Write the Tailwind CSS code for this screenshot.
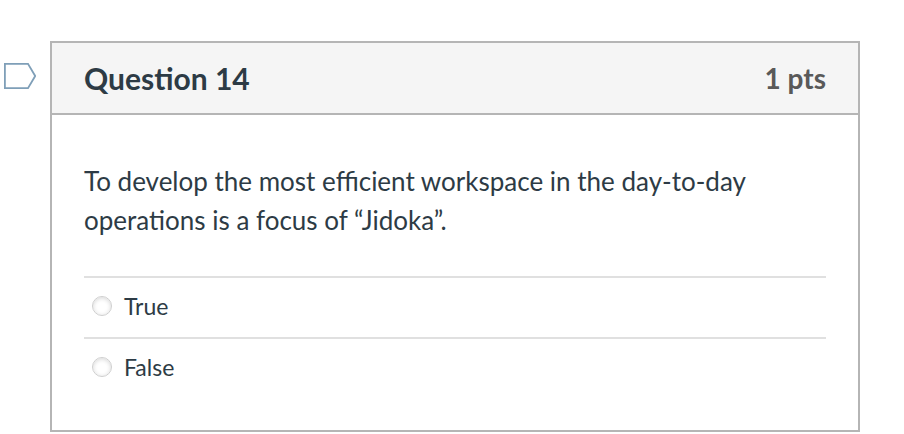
<!DOCTYPE html>
<html lang="en">
<head>
    <meta charset="UTF-8">
    <meta name="viewport" content="width=device-width, initial-scale=1.0">
    <title>Question 14</title>
    <script src="https://cdn.jsdelivr.net/npm/@tailwindcss/browser@4"></script>
</head>
<body class="bg-white font-['Lato',sans-serif] text-[#2d3b45] antialiased">
    <main class="flex items-start pl-1 pr-11 pt-[41px]">
        <!-- Flag question -->
        <button type="button" aria-label="Flag question" class="mt-[22px] mr-3.5 shrink-0 cursor-pointer">
            <svg class="block w-8 h-[26px]" viewBox="0 0 32 26" fill="none" stroke="#7f9fb8" stroke-width="1.8">
                <path d="M0.9 0.9H24L31.2 13L24 25.1H0.9Z" />
            </svg>
        </button>

        <!-- Question card -->
        <form class="flex-1 border-2 border-[#b5b5b5]">
            <header class="flex items-center justify-between bg-[#f5f5f5] border-b-2 border-[#b5b5b5] px-8 h-[72px]">
                <h1 class="text-[30px] leading-10 font-bold">Question 14</h1>
                <span class="text-[28px] leading-10 font-bold text-[#595959]">1 pts</span>
            </header>

            <div class="px-8 pt-[47px] pb-8">
                <p id="question-text" class="text-[26px] leading-[39px] mb-9">To develop the most efficient workspace in the day-to-day operations is a focus of “Jidoka”.</p>

                <!-- Answers -->
                <div role="radiogroup" aria-labelledby="question-text">
                    <div class="flex items-center gap-3 border-t-2 border-[#e0e0e0] h-[61px] pl-2 pb-1">
                        <input type="radio" id="answer-true" name="answer" class="appearance-none size-5 rounded-full border border-[#cfcfcf] bg-white shadow-[inset_0_1px_4px_#d8d8d8] checked:bg-[#2d3b45]">
                        <label for="answer-true" class="text-[23px] leading-8">True</label>
                    </div>
                    <div class="flex items-center gap-3 border-t-2 border-[#e0e0e0] h-[61px] pl-2 pb-1">
                        <input type="radio" id="answer-false" name="answer" class="appearance-none size-5 rounded-full border border-[#cfcfcf] bg-white shadow-[inset_0_1px_4px_#d8d8d8] checked:bg-[#2d3b45]">
                        <label for="answer-false" class="text-[23px] leading-8">False</label>
                    </div>
                </div>
            </div>
        </form>
    </main>
</body>
</html>
